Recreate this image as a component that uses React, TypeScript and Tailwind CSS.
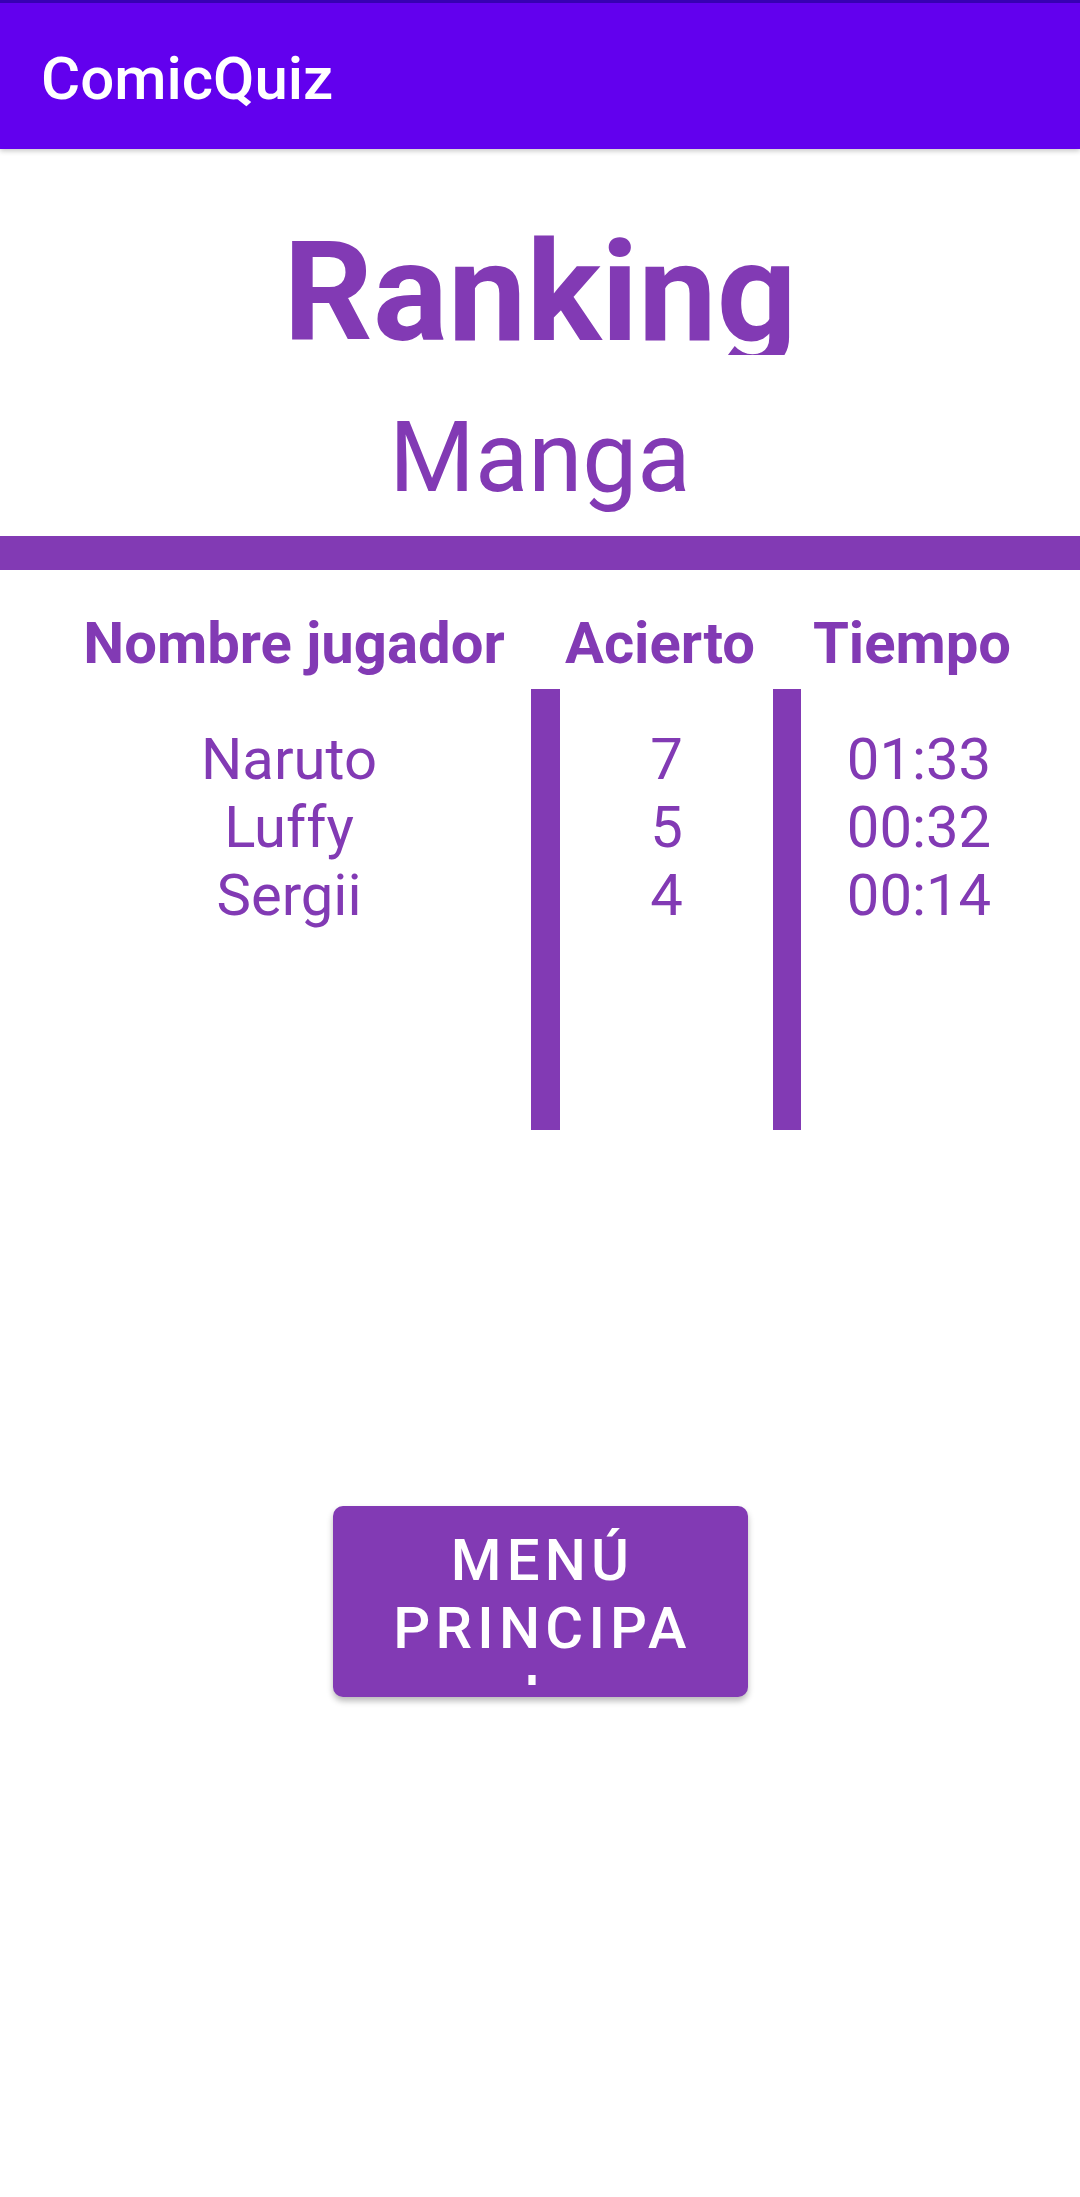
import React from "react";

const rows = [
  { name: "Naruto", hits: "7", time: "01:33" },
  { name: "Luffy", hits: "5", time: "00:32" },
  { name: "Sergii", hits: "4", time: "00:14" },
];

export default function App() {
  return (
    <div className="w-[1080px] h-[2197px] bg-white font-[Roboto,sans-serif] overflow-hidden">
      {/* App bar */}
      <div className="relative z-10 h-[149px] bg-[#6200EE] border-t-[3px] border-[#3700B3] shadow-[0_2px_5px_rgba(0,0,0,0.22)]">
        <div className="pl-[41px] pt-[46px] text-[60px] leading-[60px] font-medium text-white">
          ComicQuiz
        </div>
      </div>

      {/* Titles */}
      <div className="pt-[73px] flex flex-col items-center text-[#823ab4]">
        <div className="h-[133px] overflow-hidden text-[140px] leading-[140px] font-bold">Ranking</div>
        <div className="mt-[54px] text-[98px] leading-[98px]">Manga</div>
      </div>

      {/* Divider */}
      <div className="mt-[29px] h-[34px] bg-[#823ab4]" />

      {/* Header row */}
      <div className="mt-[39px] pl-[47px] flex text-[#823ab4] text-[58px] leading-[68px] font-bold">
        <div className="w-[494px] text-center">Nombre jugador</div>
        <div className="w-[238px] text-center">Acierto</div>
        <div className="w-[266px] text-center">Tiempo</div>
      </div>

      {/* Body */}
      <div className="mt-[12px] pl-[47px] flex h-[441px] text-[#823ab4] text-[58px] leading-[68px]">
        <div className="w-[484px] pt-[36px] flex flex-col items-center">
          {rows.map((r) => (
            <div key={r.name}>{r.name}</div>
          ))}
        </div>
        <div className="w-[29px] h-full bg-[#823ab4]" />
        <div className="w-[213px] pt-[36px] flex flex-col items-center">
          {rows.map((r) => (
            <div key={r.name}>{r.hits}</div>
          ))}
        </div>
        <div className="w-[28px] h-full bg-[#823ab4]" />
        <div className="w-[236px] pt-[36px] flex flex-col items-center">
          {rows.map((r) => (
            <div key={r.name}>{r.time}</div>
          ))}
        </div>
      </div>

      {/* Button */}
      <div className="mt-[376px] flex justify-center">
        <div className="w-[415px] h-[191px] rounded-[10px] bg-[#823ab4] shadow-[0_4px_6px_rgba(0,0,0,0.28)] pt-[20px]">
          <div className="h-[159px] overflow-hidden pl-[5px] text-center text-white text-[58px] leading-[68px] font-medium tracking-[0.09em]">
            MENÚ
            <br />
            PRINCIPA
            <br />
            L
          </div>
        </div>
      </div>
    </div>
  );
}
